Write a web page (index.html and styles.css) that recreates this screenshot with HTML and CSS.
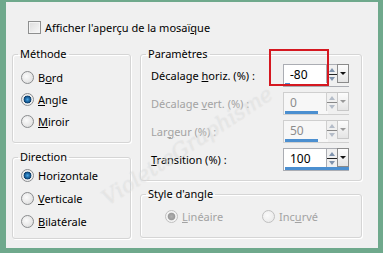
FILE: index.html
```html
<!DOCTYPE html>
<html lang="fr">
<head>
  <meta charset="UTF-8" />
  <title>Mosaïque - Paramètres</title>
  <link rel="stylesheet" href="styles.css">
</head>
<body>
  <div class="dialog">
    <label class="check-row">
      <span class="checkbox"></span>
      <span>Afficher l'aperçu de la mosaï<u>q</u>ue</span>
    </label>

    <div class="columns">
      <div class="col-left">
        <fieldset class="group methode">
          <legend>Méthode</legend>
          <div class="list">
            <div class="opt"><span class="radio"></span><span>B<u>o</u>rd</span></div>
            <div class="opt"><span class="radio on"></span><span><u>A</u>ngle</span></div>
            <div class="opt"><span class="radio"></span><span><u>M</u>iroir</span></div>
          </div>
        </fieldset>
        <fieldset class="group direction">
          <legend>Direction</legend>
          <div class="list">
            <div class="opt"><span class="radio on"></span><span>Hori<u>z</u>ontale</span></div>
            <div class="opt"><span class="radio"></span><span><u>V</u>erticale</span></div>
            <div class="opt"><span class="radio"></span><span><u>B</u>ilatérale</span></div>
          </div>
        </fieldset>
      </div>

      <div class="col-right">
        <fieldset class="group params">
          <legend>Paramètres</legend>
          <div class="param-grid">
            <div class="plabel">Décalage <u>h</u>oriz. (%) :</div>
            <div class="spin">
              <div class="spin-top">
                <div class="field">-80</div>
                <div class="arrows"><svg width="10" height="19" viewBox="0 0 10 19"><path d="M2 7 L5 3 L8 7 Z" fill="#7f93ad"/><path d="M2 12 L5 16 L8 12 Z" fill="#7f93ad"/><path d="M0 9.5 H10" stroke="#222" stroke-width="1"/></svg></div>
                <div class="drop"><svg width="10" height="17" viewBox="0 0 10 17"><path d="M2 7 L5 10 L8 7 Z" fill="#111"/></svg></div>
              </div>
              <div class="spin-track"><div class="spin-bar" style="width:5px"></div></div>
            </div>

            <div class="plabel off">Décalage <u>v</u>ert. (%) :</div>
            <div class="spin off">
              <div class="spin-top">
                <div class="field">0</div>
                <div class="arrows"><svg width="10" height="19" viewBox="0 0 10 19"><path d="M2 7 L5 3 L8 7 Z" fill="#b4bcc8"/><path d="M2 12 L5 16 L8 12 Z" fill="#b4bcc8"/><path d="M0 9.5 H10" stroke="#888" stroke-width="1"/></svg></div>
                <div class="drop"><svg width="10" height="17" viewBox="0 0 10 17"><path d="M2 7 L5 10 L8 7 Z" fill="#999"/></svg></div>
              </div>
              <div class="spin-track"><div class="spin-bar" style="width:33px"></div></div>
            </div>

            <div class="plabel off">Lar<u>g</u>eur (%) :</div>
            <div class="spin off">
              <div class="spin-top">
                <div class="field">50</div>
                <div class="arrows"><svg width="10" height="19" viewBox="0 0 10 19"><path d="M2 7 L5 3 L8 7 Z" fill="#b4bcc8"/><path d="M2 12 L5 16 L8 12 Z" fill="#b4bcc8"/><path d="M0 9.5 H10" stroke="#888" stroke-width="1"/></svg></div>
                <div class="drop"><svg width="10" height="17" viewBox="0 0 10 17"><path d="M2 7 L5 10 L8 7 Z" fill="#999"/></svg></div>
              </div>
              <div class="spin-track"><div class="spin-bar" style="width:33px"></div></div>
            </div>

            <div class="plabel"><u>T</u>ransition (%) :</div>
            <div class="spin">
              <div class="spin-top">
                <div class="field">100</div>
                <div class="arrows"><svg width="10" height="19" viewBox="0 0 10 19"><path d="M2 7 L5 3 L8 7 Z" fill="#7f93ad"/><path d="M2 12 L5 16 L8 12 Z" fill="#7f93ad"/><path d="M0 9.5 H10" stroke="#222" stroke-width="1"/></svg></div>
                <div class="drop"><svg width="10" height="17" viewBox="0 0 10 17"><path d="M2 7 L5 10 L8 7 Z" fill="#111"/></svg></div>
              </div>
              <div class="spin-track"><div class="spin-bar" style="width:64px"></div></div>
            </div>
          </div>
        </fieldset>

        <fieldset class="group style-angle">
          <legend>Style d'angle</legend>
          <div class="style-row">
            <div class="opt off"><span class="radio on dim"></span><span><u>L</u>inéaire</span></div>
            <div class="opt off"><span class="radio dim"></span><span>Inc<u>u</u>rvé</span></div>
          </div>
        </fieldset>
      </div>
    </div>

    <div class="highlight"></div>
    <div class="watermark">VioletteGraphisme</div>
  </div>
</body>
</html>
```

FILE: styles.css
```css
body {
  margin: 0;
  background: #6fa98c;
  font-family: "Noto Sans", sans-serif;
  font-size: 11px;
  color: #000;
}
.dialog {
  position: relative;
  margin: 2px 5px 0 6px;
  height: 246px;
  background: #f0f0f0;
  padding: 17px 16px 0 6px;
  box-sizing: border-box;
  overflow: hidden;
}
.check-row {
  display: flex;
  align-items: center;
  gap: 4px;
  height: 16px;
  padding-left: 16px;
}
.checkbox {
  width: 11px;
  height: 11px;
  border: 1px solid #8e8f8f;
  background: linear-gradient(135deg, #dcdcdc, #f8f8f8);
  box-shadow: inset 0 0 0 1px #f4f4f4;
}
.columns {
  display: grid;
  grid-template-columns: 119px 222px;
  gap: 9px;
  margin-top: 11px;
}
.col-left, .col-right {
  display: flex;
  flex-direction: column;
}
.group {
  margin: 0;
  padding: 0;
  border: 1px solid #d5d5d5;
  border-radius: 3px;
  box-shadow: inset 1px 1px 0 #fff, 1px 1px 0 #fff;
  min-width: 0;
}
.group legend {
  margin-left: 5px;
  padding: 0 2px;
  line-height: 16px;
}
.opt {
  display: flex;
  align-items: center;
  gap: 4px;
  height: 22px;
}
.radio {
  width: 11px;
  height: 11px;
  border: 1px solid #8a8c8e;
  border-radius: 50%;
  background: radial-gradient(circle at 40% 40%, #fbfbfb, #d8d8d8);
}
.radio.on {
  background: radial-gradient(circle, #48a8e8 0, #1a5f98 2.5px, #0c3d6a 3.6px, #e6e6e6 4.2px, #f4f4f4 5.5px);
}
.radio.dim {
  border-color: #c0c0c0;
  background: radial-gradient(circle at 40% 40%, #fafafa, #e6e6e6);
}
.radio.on.dim {
  background: radial-gradient(circle, #b0b0b0 0, #9a9a9a 3.4px, #f0f0f0 4.2px, #f6f6f6 5.5px);
}
.methode .list {
  padding: 4px 0 10px 8px;
}
.direction {
  margin-top: 6px;
}
.direction .list {
  margin-top: -1px;
  padding: 0 0 5px 8px;
}
.direction .opt {
  height: 23px;
}
.params .param-grid {
  display: grid;
  grid-template-columns: 132px 66px;
  row-gap: 6px;
  align-items: center;
  padding: 2px 0 10px 10px;
}
.plabel.off, .opt.off {
  color: #a3a3a3;
}
.spin {
  display: flex;
  flex-direction: column;
  width: 66px;
  height: 22px;
}
.spin-top {
  display: flex;
  height: 19px;
}
.field {
  width: 37px;
  padding-left: 6px;
  background: #fff;
  border: 1px solid #abadb3;
  border-bottom: 0;
  font-size: 12px;
  line-height: 20px;
}
.spin.off .field {
  background: #f7f7f7;
  border-color: #cfcfcf;
  color: #8c8c8c;
}
.arrows {
  width: 10px;
  border-top: 1px solid #abadb3;
  box-sizing: border-box;
  line-height: 0;
}
.drop {
  width: 10px;
  height: 17px;
  border: 1px solid #8a8a8a;
  background: linear-gradient(#fdfdfd, #e4e4e4);
  line-height: 0;
}
.spin.off .drop, .spin.off .arrows {
  border-color: #c8c8c8;
}
.spin-track {
  height: 3px;
  border-left: 1px solid #abadb3;
  border-bottom: 1px solid #abadb3;
  background: linear-gradient(to right, #fff 44px, transparent 44px);
  padding: 0 0 0 1px;
}
.spin.off .spin-track {
  border-color: #cfcfcf;
  background: linear-gradient(to right, #f7f7f7 44px, transparent 44px);
}
.spin-bar {
  height: 3px;
  background: #4b8fd0;
}
.style-angle {
  margin-top: 5px;
}
.style-row {
  display: grid;
  grid-template-columns: 97px auto;
  padding: 3px 0 10px 24px;
}
.highlight {
  position: absolute;
  left: 263px;
  top: 47px;
  width: 56px;
  height: 33px;
  border: 2px solid #d51820;
}
.watermark {
  position: absolute;
  left: 82px;
  top: 132px;
  transform: rotate(-33deg);
  font-family: "DejaVu Serif", serif;
  font-style: italic;
  font-size: 21px;
  color: rgba(255, 255, 255, 0.35);
  text-shadow: 0 0 1px rgba(140, 140, 140, 0.25);
  pointer-events: none;
  white-space: nowrap;
}
```
